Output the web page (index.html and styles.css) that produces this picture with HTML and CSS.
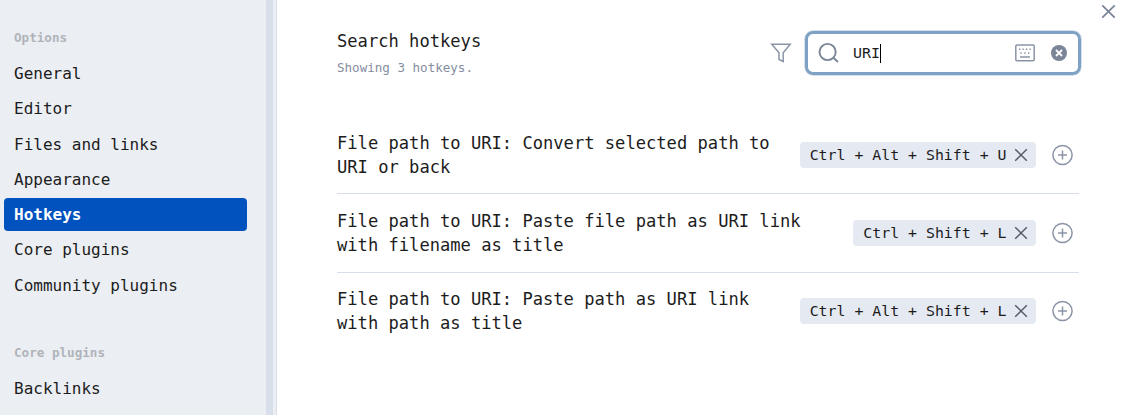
FILE: index.html
```html
<!DOCTYPE html>
<html lang="en">
<head>
<meta charset="utf-8">
<title>Settings</title>
<link rel="stylesheet" href="styles.css">
</head>
<body>
<svg class="defs" width="0" height="0">
  <symbol id="cross" viewBox="0 0 14 14"><path d="M1.2 1.2 12.8 12.8M12.8 1.2 1.2 12.8"/></symbol>
  <symbol id="add" viewBox="0 0 22 22"><circle cx="10.5" cy="11" r="9.6"/><path d="M10.5 6.5v9M6 11h9"/></symbol>
</svg>
<div class="modal">
  <nav class="sidebar">
    <div class="group-title">Options</div>
    <div class="item">General</div>
    <div class="item">Editor</div>
    <div class="item">Files and links</div>
    <div class="item">Appearance</div>
    <div class="item active">Hotkeys</div>
    <div class="item">Core plugins</div>
    <div class="item">Community plugins</div>
    <div class="group-title second">Core plugins</div>
    <div class="item">Backlinks</div>
  </nav>
  <div class="scrollbar"></div>
  <main class="content">
    <header class="search-row">
      <div class="info">
        <div class="name">Search hotkeys</div>
        <div class="desc">Showing 3 hotkeys.</div>
      </div>
      <svg class="filter" width="22" height="22" viewBox="0 0 22 22"><path d="M1.8 2.3H20.2L13.2 10.7V19.5L9 17.5V10.7Z"/></svg>
      <div class="search">
        <svg class="magnifier" width="22" height="22" viewBox="0 0 22 22"><circle cx="9.6" cy="10" r="8.1"/><path d="M15.4 15.8 20 20"/></svg>
        <span class="query">URI</span><span class="caret"></span>
        <svg class="keyboard" width="20" height="18" viewBox="0 0 20 18"><rect x=".8" y="1" width="18.4" height="15.8" rx="1.2"/><path d="M4 5.3h1.4M7.4 5.3h1.4M10.9 5.3h1.4M14.4 5.3h1.4M5.3 9h1.4M9.2 9h1.4M13 9h1.4M5 13h10"/></svg>
        <svg class="clear" width="16" height="16" viewBox="0 0 16 16"><circle cx="8" cy="8" r="8"/><path d="M5 5 11 11M11 5 5 11"/></svg>
      </div>
    </header>
    <section class="rows">
      <div class="row first">
        <div class="name">File path to URI: Convert selected path to<br>URI or back</div>
        <div class="chip"><span>Ctrl + Alt + Shift + U</span><svg width="14" height="14"><use href="#cross"/></svg></div>
        <svg class="add" width="22" height="22"><use href="#add"/></svg>
      </div>
      <div class="row">
        <div class="name">File path to URI: Paste file path as URI link<br>with filename as title</div>
        <div class="chip"><span>Ctrl + Shift + L</span><svg width="14" height="14"><use href="#cross"/></svg></div>
        <svg class="add" width="22" height="22"><use href="#add"/></svg>
      </div>
      <div class="row last">
        <div class="name">File path to URI: Paste path as URI link<br>with path as title</div>
        <div class="chip"><span>Ctrl + Alt + Shift + L</span><svg width="14" height="14"><use href="#cross"/></svg></div>
        <svg class="add" width="22" height="22"><use href="#add"/></svg>
      </div>
    </section>
  </main>
  <svg class="close" width="15" height="15"><use href="#cross"/></svg>
</div>
</body>
</html>
```
FILE: styles.css
```css
* { box-sizing: border-box; }
body { margin: 0; background: #fff; color: #1c1c1c; font-family: "DejaVu Sans Mono", monospace; }
svg { display: block; flex: none; fill: none; stroke: #8b94a6; stroke-width: 1.5; }
.defs { position: absolute; }
.modal { position: relative; display: flex; width: 1126px; height: 415px; overflow: hidden; }
.sidebar { width: 266px; flex: none; padding: 27.6px 19px 0 4px; background: #ebeef3; }
.group-title { height: 20px; margin-bottom: 9.3px; padding-left: 10px; font-size: 12.6px; line-height: 20px; font-weight: bold; color: #b0b4ba; }
.group-title.second { margin-top: 41.1px; }
.item { height: 33px; margin-bottom: 2.3px; padding-left: 10px; border-radius: 4px; font-size: 16px; line-height: 33px; white-space: nowrap; }
.item:nth-child(4) { padding-top: .4px; }
.item.active { background: #0052bf; color: #fff; font-weight: bold; }
.scrollbar { width: 11px; flex: none; background: #ebeef3; border-left: 7px solid #d8deea; border-right: 1px solid #d8deea; }
.content { width: 802px; padding: 29px 0 0 60px; flex: none; }
.search-row { display: flex; height: 87px; align-items: flex-start; }
.info { flex: 1; }
.name { font-size: 17.11px; line-height: 24px; white-space: nowrap; }
.desc { margin-top: 5px; font-size: 12.55px; line-height: 20px; color: #858da0; }
.filter { margin: 13px 13px 0 0; }
.search { display: flex; align-items: center; width: 276px; height: 44px; margin: 2px -2px 0 0; padding: 0 11px 0 10px; border: 3px solid #7fa1c4; border-radius: 8px; box-shadow: 0 0 0 .5px #a9c1d8; }
.magnifier { stroke: #7b8598; stroke-width: 1.9; }
.query { margin-left: 13px; font-size: 14.95px; line-height: 20px; }
.caret { width: 1px; height: 19px; background: #000; }
.keyboard { margin-left: auto; margin-right: 16px; }
.clear circle { fill: #7b8598; stroke: none; }
.clear path { stroke: #fff; stroke-width: 1.8; }
.row { display: flex; align-items: center; width: 742px; height: 79px; border-bottom: 1px solid #d8deea; }
.row.first { height: 78px; padding-top: 1px; }
.row.last { height: 76px; border: 0; }
.row .name { flex: 1; }
.chip { display: flex; align-items: center; height: 26px; margin-right: 16px; padding: 0 8px 0 10px; border-radius: 4px; background: #e5e9f2; font-size: 14.87px; line-height: 27px; white-space: nowrap; }
.chip svg { margin-left: 7.5px; stroke: #555b66; }
.add { margin-right: 5px; }
.close { position: absolute; left: 1101px; top: 4px; stroke: #7b8598; stroke-width: 1.6; }
```
